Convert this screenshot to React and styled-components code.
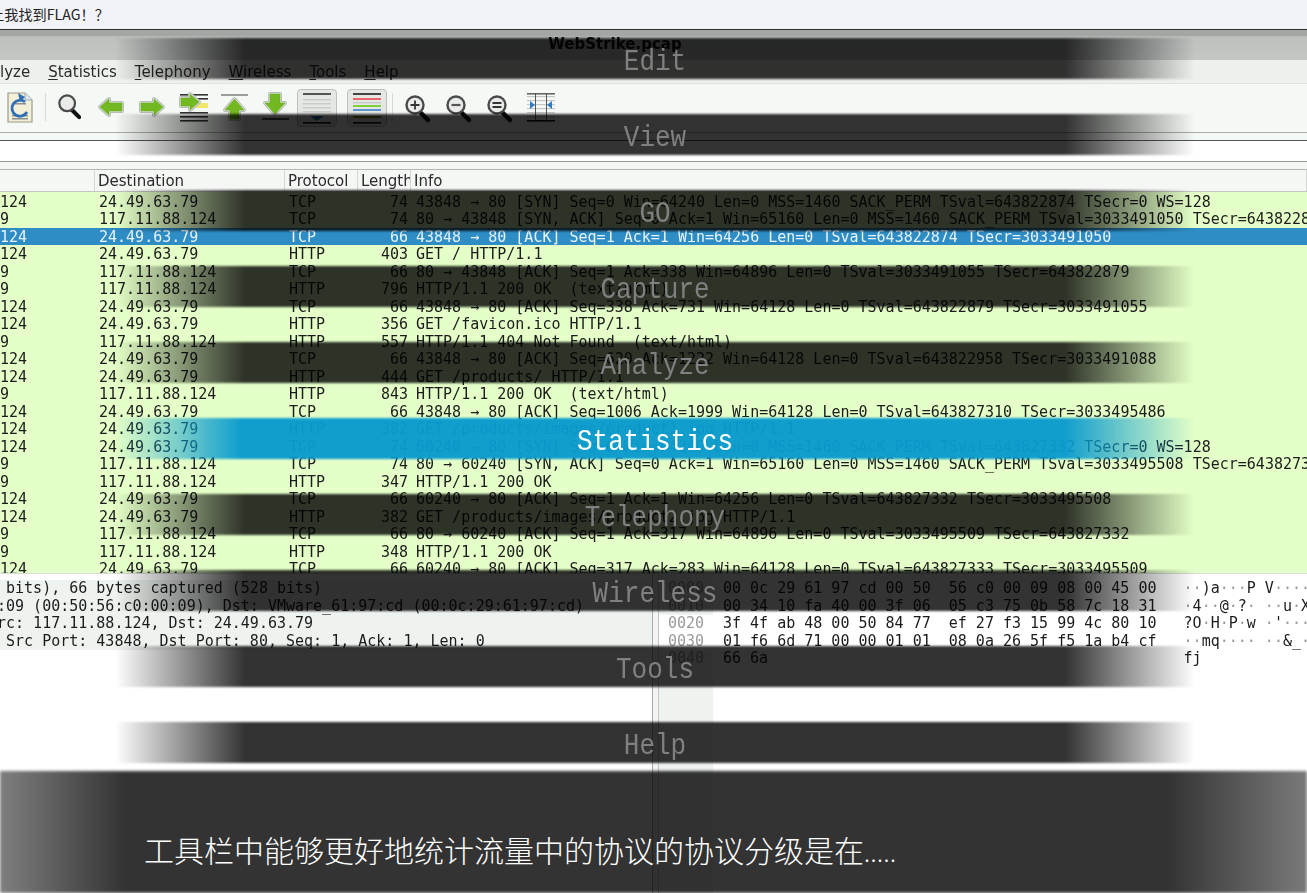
import React from "react";
import styled, { createGlobalStyle } from "styled-components";

const Global = createGlobalStyle`
  html, body { margin: 0; padding: 0; background: #fff; }
  body { width: 1307px; height: 893px; overflow: hidden; }
`;

const Stage = styled.div`
  position: relative;
  width: 1307px;
  height: 893px;
  overflow: hidden;
`;
const Strip = styled.div`
  height: 29px;
  background: #f2f3f8;
  border-bottom: 1px solid #2d2d2d;
  display: flex;
  align-items: center;
  font: 14.2px/1 "Noto Sans CJK SC", sans-serif;
  color: #222;
  overflow: hidden;
  & > span { margin-left: -10px; white-space: pre; }
`;
const Shot = styled.div`
  height: 863px;
  display: flex;
  flex-direction: column;
  overflow: hidden;
  filter: blur(0.4px);
  background: #fff;
`;
const TitleBar = styled.div`
  height: 30px;
  flex: none;
  background: linear-gradient(#a3a6a3 0, #a3a6a3 20%, #bcc1be 22%, #c3c8c5 100%);
  display: flex;
  justify-content: center;
  font: bold 15px/28px "DejaVu Sans", sans-serif;
  color: #111;
  & > span { margin-left: -77px; }
`;
const MenuBar = styled.div`
  height: 23px;
  flex: none;
  background: #edf0ec;
  display: flex;
  gap: 18px;
  align-items: center;
  font: 15px "DejaVu Sans", sans-serif;
  color: #2a2a2a;
  & u { text-underline-offset: 2px; }
`;
const Toolbar = styled.div`
  height: 50px;
  flex: none;
  box-sizing: border-box;
  background: #f5f9f5;
  border-top: 1px solid #dfe2df;
  border-bottom: 1px solid #a9aca9;
  padding-bottom: 2px;
  display: flex;
  align-items: center;
`;
const Tool = styled.svg`
  flex: none;
  display: block;
  margin-left: ${(p) => p.$ml}px;
`;
const ToolSep = styled.div`
  flex: none;
  width: 1px;
  height: 28px;
  background: #d6d9d6;
  margin-left: ${(p) => p.$ml}px;
`;
const ToggleBtn = styled.div`
  flex: none;
  width: 40px;
  height: 38px;
  box-sizing: border-box;
  margin-left: ${(p) => p.$ml}px;
  margin-top: 2px;
  background: #e4e7e4;
  border: 1px solid #bcbfbc;
  border-radius: 4px;
  display: flex;
  align-items: center;
  justify-content: center;
`;
const Gap = styled.div`
  height: 7px;
  flex: none;
  background: #f5f9f5;
  border-bottom: 1px solid #555;
`;
const FilterBar = styled.div`
  height: 20px;
  flex: none;
  background: #fff;
  border-bottom: 1px solid #999;
`;
const Gap2 = styled.div`
  height: 7px;
  flex: none;
  background: #f5f7f5;
  border-bottom: 1px solid #b5b5b5;
`;
const HeaderRow = styled.div`
  height: 22px;
  flex: none;
  box-sizing: border-box;
  background: #f5f7f5;
  border-bottom: 1px solid #c5c5c5;
  display: grid;
  grid-template-columns: 95px 190px 73px 53px 1fr;
  font: 15px/23px "DejaVu Sans", sans-serif;
  color: #2a2a2a;
`;
const HeadCell = styled.div`
  border-right: 1px solid #d5d7d5;
  padding-left: 3px;
  overflow: hidden;
  white-space: nowrap;
`;
const PacketList = styled.div`
  height: 381px;
  flex: none;
  overflow: hidden;
  background: #e4ffc7;
  padding-top: 0.5px;
  box-sizing: border-box;
`;
const Packet = styled.div`
  height: 17.52px;
  display: grid;
  grid-template-columns: 99px 190px 72px 47px 1fr;
  font: 15px/19.5px "DejaVu Sans Mono", monospace;
  white-space: pre;
  background: ${(p) => (p.$sel ? "#2e8dc5" : "#e4ffc7")};
  color: ${(p) => (p.$sel ? "#e8f3fa" : "#1c1c1c")};
`;
const Right = styled.span`
  text-align: right;
`;
const Info = styled.span`
  padding-left: 8px;
  overflow: hidden;
`;
const Lower = styled.div`
  flex: 1;
  display: grid;
  grid-template-columns: 652px 7px 1fr;
  border-top: 1px solid #d8d8d8;
  min-height: 0;
`;
const Details = styled.div`
  padding-top: 6px;
  font: 15px/17.5px "DejaVu Sans Mono", monospace;
  color: #1c1c1c;
`;
const DetailRow = styled.div`
  height: 17.5px;
  white-space: pre;
  background: #eef3ef;
  overflow: hidden;
  text-indent: -3px;
`;
const Sash = styled.div`
  border-left: 1px solid #aaa;
  border-right: 1px solid #c3c6c3;
  background: #f4f4f4;
`;
const Bytes = styled.div`
  display: grid;
  grid-template-columns: 54px 1fr;
  overflow: hidden;
  font: 15px/17.5px "DejaVu Sans Mono", monospace;
  color: #1c1c1c;
`;
const OffsetCol = styled.div`
  display: flex;
  flex-direction: column;
  padding-top: 6px;
  background: #eef3f0;
  color: #9a9c9a;
  & > div { height: 17.5px; padding-left: 9px; }
`;
const WhiteOffset = styled.div`
  background: #fff;
`;
const HexCol = styled.div`
  padding-top: 6px;
  background: #fff;
  & > div { height: 17.5px; white-space: pre; padding-left: 10px; }
  & i { font-style: normal; color: #999; }
`;

const Overlay = styled.div`
  position: absolute;
  inset: 0;
  display: flex;
  flex-direction: column;
  padding-top: 38px;
  box-sizing: border-box;
`;
const Bar = styled.div`
  position: relative;
  flex: none;
  box-sizing: border-box;
  width: 1080px;
  height: 41px;
  margin: 0 0 35px 115px;
  padding-top: 6px;
  display: flex;
  align-items: center;
  justify-content: center;
  font: 26px/1 "Liberation Mono", monospace;
  color: ${(p) => (p.$active ? "#ffffff" : "#808080")};
  &::before {
    content: "";
    position: absolute;
    inset: 0;
    filter: blur(0.8px);
    background: ${(p) =>
      p.$active
        ? "linear-gradient(90deg, rgba(10,155,206,0) 0, rgba(10,155,206,.97) 125px, rgba(10,155,206,.97) 950px, rgba(10,155,206,0) 1080px)"
        : "linear-gradient(90deg, rgba(0,0,0,0) 0, rgba(0,0,0,.8) 130px, rgba(0,0,0,.8) 950px, rgba(0,0,0,0) 1080px)"};
  }
  & > span { position: relative; display: block; transform: scaleY(1.12); }
`;
const Caption = styled.div`
  position: absolute;
  left: 0;
  right: 0;
  bottom: 0;
  height: 122px;
  display: flex;
  align-items: center;
  padding: 33px 0 0 144px;
  box-sizing: border-box;
  font: 300 30px/1 "Noto Sans CJK SC", sans-serif;
  color: #fff;
  &::before {
    content: "";
    position: absolute;
    inset: 0;
    filter: blur(1.4px);
    background: linear-gradient(90deg, rgba(0,0,0,.5) 0, rgba(0,0,0,.8) 125px, rgba(0,0,0,.8) 1167px, rgba(0,0,0,.52) 1307px);
  }
  & > span { position: relative; white-space: pre; }
  & small { font-size: 24px; letter-spacing: 0.5px; }
`;

const s = "24.49.63.79";
const c = "117.11.88.124";
const rows = [
  ["124", s, "TCP", "74", "43848 → 80 [SYN] Seq=0 Win=64240 Len=0 MSS=1460 SACK_PERM TSval=643822874 TSecr=0 WS=128"],
  ["9", c, "TCP", "74", "80 → 43848 [SYN, ACK] Seq=0 Ack=1 Win=65160 Len=0 MSS=1460 SACK_PERM TSval=3033491050 TSecr=643822874 WS=128"],
  ["124", s, "TCP", "66", "43848 → 80 [ACK] Seq=1 Ack=1 Win=64256 Len=0 TSval=643822874 TSecr=3033491050", true],
  ["124", s, "HTTP", "403", "GET / HTTP/1.1"],
  ["9", c, "TCP", "66", "80 → 43848 [ACK] Seq=1 Ack=338 Win=64896 Len=0 TSval=3033491055 TSecr=643822879"],
  ["9", c, "HTTP", "796", "HTTP/1.1 200 OK  (text/html)"],
  ["124", s, "TCP", "66", "43848 → 80 [ACK] Seq=338 Ack=731 Win=64128 Len=0 TSval=643822879 TSecr=3033491055"],
  ["124", s, "HTTP", "356", "GET /favicon.ico HTTP/1.1"],
  ["9", c, "HTTP", "557", "HTTP/1.1 404 Not Found  (text/html)"],
  ["124", s, "TCP", "66", "43848 → 80 [ACK] Seq=620 Ack=1222 Win=64128 Len=0 TSval=643822958 TSecr=3033491088"],
  ["124", s, "HTTP", "444", "GET /products/ HTTP/1.1"],
  ["9", c, "HTTP", "843", "HTTP/1.1 200 OK  (text/html)"],
  ["124", s, "TCP", "66", "43848 → 80 [ACK] Seq=1006 Ack=1999 Win=64128 Len=0 TSval=643827310 TSecr=3033495486"],
  ["124", s, "HTTP", "382", "GET /products/images/product1.jpg HTTP/1.1"],
  ["124", s, "TCP", "74", "60240 → 80 [SYN] Seq=0 Win=64240 Len=0 MSS=1460 SACK_PERM TSval=643827332 TSecr=0 WS=128"],
  ["9", c, "TCP", "74", "80 → 60240 [SYN, ACK] Seq=0 Ack=1 Win=65160 Len=0 MSS=1460 SACK_PERM TSval=3033495508 TSecr=643827332 WS=128"],
  ["9", c, "HTTP", "347", "HTTP/1.1 200 OK"],
  ["124", s, "TCP", "66", "60240 → 80 [ACK] Seq=1 Ack=1 Win=64256 Len=0 TSval=643827332 TSecr=3033495508"],
  ["124", s, "HTTP", "382", "GET /products/images/product2.jpg HTTP/1.1"],
  ["9", c, "TCP", "66", "80 → 60240 [ACK] Seq=1 Ack=317 Win=64896 Len=0 TSval=3033495509 TSecr=643827332"],
  ["9", c, "HTTP", "348", "HTTP/1.1 200 OK"],
  ["124", s, "TCP", "66", "60240 → 80 [ACK] Seq=317 Ack=283 Win=64128 Len=0 TSval=643827333 TSecr=3033495509"],
];
const details = [
  " bits), 66 bytes captured (528 bits)",
  ":09 (00:50:56:c0:00:09), Dst: VMware_61:97:cd (00:0c:29:61:97:cd)",
  "rc: 117.11.88.124, Dst: 24.49.63.79",
  " Src Port: 43848, Dst Port: 80, Seq: 1, Ack: 1, Len: 0",
];
const hex = [
  ["00 0c 29 61 97 cd 00 50  56 c0 00 09 08 00 45 00", "··)a···P V·······"],
  ["00 34 10 fa 40 00 3f 06  05 c3 75 0b 58 7c 18 31", "·4··@·?· ··u·X|··"],
  ["3f 4f ab 48 00 50 84 77  ef 27 f3 15 99 4c 80 10", "?O·H·P·w ·'···L··"],
  ["01 f6 6d 71 00 00 01 01  08 0a 26 5f f5 1a b4 cf", "··mq···· ··&_····"],
  ["66 6a", "fj"],
];
const menus = ["Edit", "View", "GO", "Capture", "Analyze", "Statistics", "Telephony", "Wireless", "Tools", "Help"];

const Ascii = ({ text }) =>
  text.split("").map((ch, i) => (ch === "·" ? <i key={i}>·</i> : ch));

const GREEN = "#72b820";
const ArrowPoly = ({ d }) => (
  <>
    <path d={d} fill="#e2e5e2" stroke="#b9bdb9" strokeWidth="4" strokeLinejoin="round" />
    <path d={d} fill="#eef0ee" stroke="#eef0ee" strokeWidth="1.6" strokeLinejoin="round" />
    <path d={d} fill={GREEN} stroke="#66a81a" strokeWidth="0.6" strokeLinejoin="round" />
  </>
);
const Mag = ({ glyph }) => (
  <>
    <path d="M16 19 L24 27" stroke="#111" strokeWidth="4.5" strokeLinecap="round" />
    <circle cx="11" cy="12" r="8.5" fill="#e9ebe9" stroke="#4a4a4a" strokeWidth="2.4" />
    {glyph}
  </>
);

const Icons = () => (
  <>
    <Tool $ml={7} width="26" height="34" viewBox="0 0 26 34">
      <path d="M1 3 H18 L25 10 V32 H1 Z" fill="#f3efd9" stroke="#9b9a85" strokeWidth="1.2" />
      <path d="M18 3 V10 H25" fill="#dfe7f2" stroke="#9aa" strokeWidth="1" />
      <g fill="#8b8f8f"><rect x="5" y="25" width="16" height="1.5" /><rect x="5" y="28" width="16" height="1.5" /><rect x="7" y="13" width="12" height="1.5" /></g>
      <path d="M18 12 A8 8 0 1 0 20 22" fill="none" stroke="#2f6fb4" strokeWidth="2.8" />
      <path d="M11 3 L18 7 L13 12 Z" fill="#2f6fb4" />
    </Tool>
    <ToolSep $ml={12} />
    <Tool $ml={11} width="24" height="34" viewBox="0 0 26 32">
      <Mag />
    </Tool>
    <Tool $ml={16} width="28" height="34" viewBox="0 0 28 34">
      <ArrowPoly d="M3 17 L12 9 V13 H25 V21 H12 V25 Z" />
    </Tool>
    <Tool $ml={13} width="28" height="34" viewBox="0 0 28 34">
      <ArrowPoly d="M25 17 L16 9 V13 H3 V21 H16 V25 Z" />
    </Tool>
    <Tool $ml={12} width="31" height="34" viewBox="0 0 31 34">
      <g fill="#333">
        <rect x="2" y="4" width="28" height="1.6" /><rect x="20" y="8" width="10" height="1.6" />
        <rect x="2" y="22" width="28" height="1.6" /><rect x="2" y="26" width="28" height="1.6" /><rect x="2" y="30" width="28" height="1.6" />
      </g>
      <rect x="18" y="13" width="12" height="5" fill="#f3e76a" />
      <ArrowPoly d="M21 12 L12 4 V8 H3 V16 H12 V20 Z" />
    </Tool>
    <Tool $ml={11} width="29" height="34" viewBox="0 0 29 34">
      <rect x="1" y="4" width="27" height="2" fill="#9a9d9a" />
      <ArrowPoly d="M14.5 9 L24 20 H19 V29 H10 V20 H5 Z" />
    </Tool>
    <Tool $ml={12} width="28" height="34" viewBox="0 0 28 34">
      <rect x="1" y="28" width="27" height="2" fill="#555" />
      <ArrowPoly d="M14 24 L24 13 H19 V4 H9 V13 H4 Z" />
    </Tool>
    <ToggleBtn $ml={8}>
      <svg width="28" height="32" viewBox="0 0 28 32">
        <rect x="0" y="1" width="28" height="2" fill="#555" />
        <g fill="#c8cbc8"><rect y="7" width="28" height="1.4" /><rect y="11" width="28" height="1.4" /><rect y="15" width="28" height="1.4" /><rect y="19" width="28" height="1.4" /></g>
        <path d="M7 24 H21 L14 29 Z" fill="#2d6fb0" />
        <rect x="0" y="30" width="28" height="1.6" fill="#111" />
      </svg>
    </ToggleBtn>
    <ToggleBtn $ml={10}>
      <svg width="28" height="32" viewBox="0 0 28 32">
        <rect y="1" width="28" height="2" fill="#444" />
        <rect y="6" width="28" height="2" fill="#e8666a" />
        <rect y="10" width="28" height="1.4" fill="#c9c9c9" />
        <rect y="13" width="28" height="2" fill="#7fcf3a" />
        <rect y="17" width="28" height="2" fill="#5f96d0" />
        <rect y="24" width="28" height="2" fill="#8a7a20" />
        <rect y="30" width="28" height="1.6" fill="#111" />
      </svg>
    </ToggleBtn>
    <ToolSep $ml={5} />
    <Tool $ml={11} width="26" height="34" viewBox="0 -3 26 34">
      <Mag glyph={<path d="M6.5 12 H15.5 M11 7.5 V16.5" stroke="#333" strokeWidth="1.8" />} />
    </Tool>
    <Tool $ml={15} width="26" height="34" viewBox="0 -3 26 34">
      <Mag glyph={<path d="M6.5 12 H15.5" stroke="#555" strokeWidth="2.2" />} />
    </Tool>
    <Tool $ml={15} width="26" height="34" viewBox="0 -3 26 34">
      <Mag glyph={<path d="M6.5 10 H15.5 M6.5 14 H15.5" stroke="#333" strokeWidth="1.8" />} />
    </Tool>
    <Tool $ml={15} width="28" height="34" viewBox="0 0 28 34">
      <g fill="#c5c8c5"><rect y="6" width="28" height="1.2" /><rect y="10" width="28" height="1.2" /><rect y="14" width="28" height="1.2" /><rect y="18" width="28" height="1.2" /><rect y="22" width="28" height="1.2" /><rect y="26" width="28" height="1.2" /></g>
      <rect y="3" width="28" height="1.6" fill="#666" />
      <rect y="30" width="28" height="1.6" fill="#111" />
      <rect x="8" y="3" width="1" height="28" fill="#555" />
      <rect x="19" y="3" width="1" height="28" fill="#555" />
      <path d="M3 11 L8 15 L3 19 Z M25 11 L20 15 L25 19 Z" fill="#2f7cc4" />
    </Tool>
  </>
);

export default function App() {
  return (
    <Stage>
      <Global />
      <Strip><span>让我找到FLAG！？</span></Strip>
      <Shot>
        <TitleBar><span>WebStrike.pcap</span></TitleBar>
        <MenuBar>
          <span>lyze</span>
          <span><u>S</u>tatistics</span>
          <span><u>T</u>elephony</span>
          <span><u>W</u>ireless</span>
          <span><u>T</u>ools</span>
          <span><u>H</u>elp</span>
        </MenuBar>
        <Toolbar><Icons /></Toolbar>
        <Gap />
        <FilterBar />
        <Gap2 />
        <HeaderRow>
          <HeadCell />
          <HeadCell>Destination</HeadCell>
          <HeadCell>Protocol</HeadCell>
          <HeadCell>Length</HeadCell>
          <HeadCell>Info</HeadCell>
        </HeaderRow>
        <PacketList>
          {rows.map((r, i) => (
            <Packet key={i} $sel={r[5]}>
              <span>{r[0]}</span>
              <span>{r[1]}</span>
              <span>{r[2]}</span>
              <Right>{r[3]}</Right>
              <Info>{r[4]}</Info>
            </Packet>
          ))}
        </PacketList>
        <Lower>
          <Details>
            {details.map((d, i) => <DetailRow key={i}>{d}</DetailRow>)}
          </Details>
          <Sash />
          <Bytes>
            <OffsetCol>
              <div>0000</div>
              <div>0010</div>
              <WhiteOffset>0020</WhiteOffset>
              <WhiteOffset>0030</WhiteOffset>
              <div>0040</div>
            </OffsetCol>
            <HexCol>
              {hex.map((h, i) => (
                <div key={i}>{h[0].padEnd(51, " ")}<Ascii text={h[1]} /></div>
              ))}
            </HexCol>
          </Bytes>
        </Lower>
      </Shot>
      <Overlay>
        {menus.map((m) => (
          <Bar key={m} $active={m === "Statistics"}><span>{m}</span></Bar>
        ))}
      </Overlay>
      <Caption>
        <span>工具栏中能够更好地统计流量中的协议的协议分级是在<small>.....</small></span>
      </Caption>
    </Stage>
  );
}
